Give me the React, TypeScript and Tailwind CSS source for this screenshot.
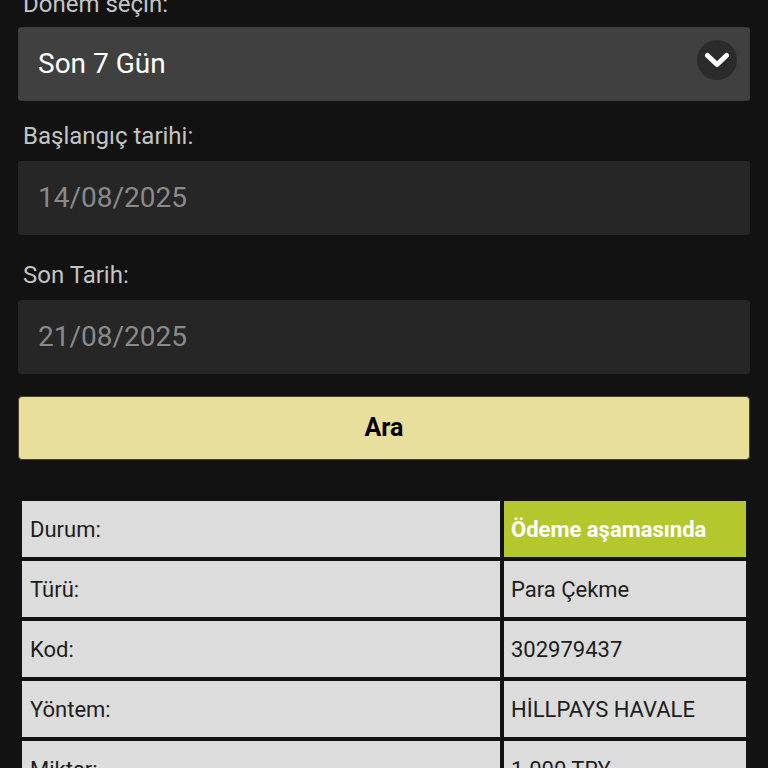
import React from "react";

const rows: { label: string; value: string; status?: boolean }[] = [
  { label: "Durum:", value: "Ödeme aşamasında", status: true },
  { label: "Türü:", value: "Para Çekme" },
  { label: "Kod:", value: "302979437" },
  { label: "Yöntem:", value: "HİLLPAYS HAVALE" },
  { label: "Miktar:", value: "1.000 TRY" },
  { label: "Tarih:", value: "21/08/2025" },
];

export default function App() {
  return (
    <div
      className="w-[768px] h-[768px] overflow-hidden bg-[#121212]"
      style={{ fontFamily: "Roboto, 'Liberation Sans', sans-serif" }}
    >
      <div className="px-[18px] mt-[-9px]">
        <div className="pl-[5px] text-[24px] leading-[27px] text-[#c4c4c4]">Dönem seçin:</div>
        <div className="mt-[9px] h-[74px] rounded-[3px] bg-[#404040] border border-[#3a3a3a] flex items-center justify-between pl-[19px] pr-[12px]">
          <span className="text-[28px] text-white">Son 7 Gün</span>
          <span className="mb-[8px] w-[40px] h-[40px] rounded-full bg-[#2b2b2b] flex items-center justify-center">
            <svg width="26" height="18" viewBox="0 0 26 18">
              <path d="M3.5 4.5 L13 13.5 L22.5 4.5" fill="none" stroke="#ffffff" strokeWidth="5" strokeLinecap="round" strokeLinejoin="round" />
            </svg>
          </span>
        </div>

        <div className="mt-[22px] pl-[5px] text-[24px] leading-[27px] text-[#c4c4c4]">Başlangıç tarihi:</div>
        <div className="mt-[11px] h-[74px] rounded-[3px] bg-[#262626] flex items-center pl-[20px]">
          <span className="text-[28px] text-[#8a8a8a]">14/08/2025</span>
        </div>

        <div className="mt-[27px] pl-[5px] text-[24px] leading-[27px] text-[#c4c4c4]">Son Tarih:</div>
        <div className="mt-[11px] h-[74px] rounded-[3px] bg-[#262626] flex items-center pl-[20px]">
          <span className="text-[28px] text-[#8a8a8a]">21/08/2025</span>
        </div>

        <button className="mt-[22px] w-full h-[64px] rounded-[4px] bg-[#e9df9c] border border-[#4a4428] text-[25px] font-bold text-black flex items-center justify-center">
          Ara
        </button>

        <table className="mt-[37px] w-[732px] border-separate border-spacing-1 table-fixed">
          <colgroup>
            <col className="w-[478px]" />
            <col className="w-[242px]" />
          </colgroup>
          <tbody>
            {rows.map((r) => (
              <tr key={r.label}>
                <td className="h-[56px] bg-[#dcdcdc] pl-[8px] text-[22px] text-[#1c1c1c] align-middle">{r.label}</td>
                <td
                  className={
                    r.status
                      ? "h-[56px] bg-[#b4c82e] pl-[7px] text-[22px] font-bold text-white align-middle whitespace-nowrap overflow-hidden"
                      : "h-[56px] bg-[#dcdcdc] pl-[7px] text-[22px] text-[#1c1c1c] align-middle whitespace-nowrap overflow-hidden"
                  }
                >
                  {r.value}
                </td>
              </tr>
            ))}
          </tbody>
        </table>
      </div>
    </div>
  );
}
